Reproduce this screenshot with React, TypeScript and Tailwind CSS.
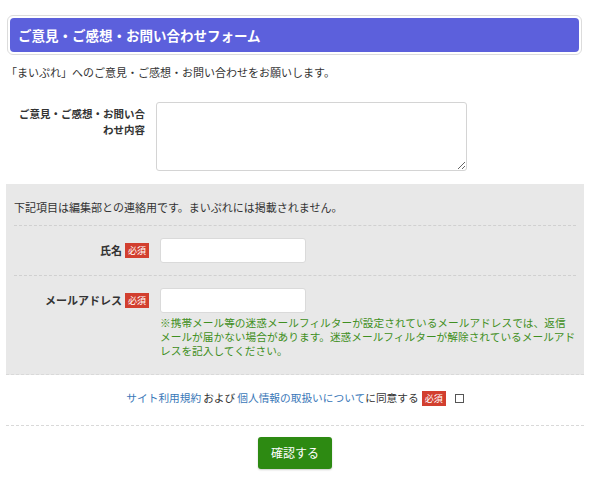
import React from "react";

function Required() {
  return (
    <span className="inline-flex h-[15px] items-center bg-[#d23f2f] px-[3px] text-[9px] font-normal leading-none text-white">
      必須
    </span>
  );
}

export default function App() {
  return (
    <div className="min-h-[490px] w-[592px] bg-white pt-[15px] pl-[6px] font-['Noto_Sans_CJK_JP',sans-serif] text-[11px] text-[#333]">
      <div className="w-[578px]">
        <div className="ml-px mr-[2px] rounded-[6px] border border-[#dcdcdc] p-[2px]">
          <h1 className="flex h-[34px] items-center rounded-[4px] bg-[#5c60dc] pl-[8px] text-[13.5px] font-bold text-white">
            ご意見・ご感想・お問い合わせフォーム
          </h1>
        </div>

        <p className="mt-[10px] leading-[14px]">「まいぷれ」へのご意見・ご感想・お問い合わせをお願いします。</p>

        <div className="mt-[23px] flex pb-[13px]">
          <div className="w-[139px] shrink-0 pt-[4px] text-right text-[10.5px] font-bold leading-[16px] text-[#333]">
            ご意見・ご感想・お問い合
            <br />
            わせ内容
          </div>
          <textarea className="ml-[11px] h-[69px] w-[311px] rounded-[3px] border border-[#d4d4d4] bg-white" />
        </div>

        <div className="border-b border-dashed border-[#d9d9d9] bg-[#e8e8e8] px-[8px] pb-[16px] pt-[16px]">
          <p className="pb-[11px] leading-[14px]">下記項目は編集部との連絡用です。まいぷれには掲載されません。</p>
          <div className="flex items-center border-t border-dashed border-[#d0d0d0] py-[12px]">
            <div className="flex w-[135px] shrink-0 items-center justify-end gap-[3px] font-bold">
              <span>氏名</span>
              <Required />
            </div>
            <input className="ml-[11px] h-[25px] w-[146px] rounded-[3px] border border-[#dadada] bg-white" />
          </div>
          <div className="flex border-t border-dashed border-[#d0d0d0] pt-[12px]">
            <div className="flex h-[25px] w-[135px] shrink-0 items-center justify-end gap-[3px] font-bold">
              <span>メールアドレス</span>
              <Required />
            </div>
            <div className="ml-[11px] min-w-0 flex-1">
              <input className="block h-[25px] w-[146px] rounded-[3px] border border-[#dadada] bg-white" />
              <p className="mt-[3px] whitespace-nowrap text-[10.7px] leading-[14px] text-[#3f8f22]">
                ※携帯メール等の迷惑メールフィルターが設定されているメールアドレスでは、返信
                <br />
                メールが届かない場合があります。迷惑メールフィルターが解除されているメールアド
                <br />
                レスを記入してください。
              </p>
            </div>
          </div>
        </div>

        <div className="flex items-center justify-center border-b border-dashed border-[#d9d9d9] pb-[19px] pt-[15px] text-[10.7px]">
          <span className="text-[#3a78b8]">サイト利用規約</span>
          <span className="ml-[2px]">および</span>
          <span className="ml-[2px] text-[#3a78b8]">個人情報の取扱いについて</span>
          <span>に同意する</span>
          <span className="ml-[3px]">
            <Required />
          </span>
          <span className="ml-[9px] inline-block h-[9px] w-[9px] border border-[#555] bg-white" />
        </div>

        <div className="flex justify-center pt-[11px]">
          <button className="h-[32px] w-[74px] rounded-[3px] bg-[#2d8a12] text-[12px] text-white shadow-[0_1px_2px_rgba(0,0,0,0.2)]">
            確認する
          </button>
        </div>
      </div>
    </div>
  );
}
